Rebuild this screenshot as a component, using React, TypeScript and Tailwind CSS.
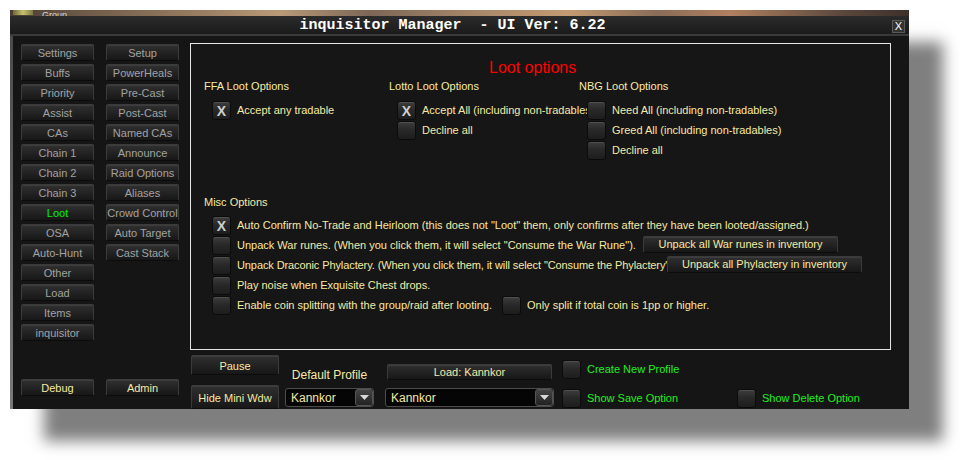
import type { ReactNode } from 'react'

const NAV_LEFT = [
  'Settings', 'Buffs', 'Priority', 'Assist', 'CAs', 'Chain 1', 'Chain 2', 'Chain 3',
  'Loot', 'OSA', 'Auto-Hunt', 'Other', 'Load', 'Items', 'inquisitor',
]
const NAV_RIGHT = [
  'Setup', 'PowerHeals', 'Pre-Cast', 'Post-Cast', 'Named CAs', 'Announce', 'Raid Options',
  'Aliases', 'Crowd Control', 'Auto Target', 'Cast Stack',
]

const btn =
  'rounded-[2px] border border-[#3b3b3b] border-b-[#0c0c0c] bg-[linear-gradient(#303030,#222_55%,#171717)] shadow-[inset_0_1px_0_rgba(255,255,255,0.07)] text-center text-[11px] whitespace-nowrap'

function NavButton({ label, active }: { label: string; active?: boolean }) {
  return (
    <div className={`${btn} h-[17px] w-[73px] pt-[1px] leading-[15px] ${active ? 'text-[#00f000]' : 'text-[#a2a2a2]'}`}>
      {label}
    </div>
  )
}

function Check({ on }: { on?: boolean }) {
  return (
    <div className="flex h-[19px] w-[19px] shrink-0 items-center justify-center rounded-[3px] border border-[#0b0b0b] bg-[linear-gradient(#3d3d3d,#292929_45%,#1d1d1d)] shadow-[inset_0_1px_0_rgba(255,255,255,0.1)]">
      {on && <span className="text-[14px] font-bold leading-none text-[#cfcfcf]">X</span>}
    </div>
  )
}

function Option({ on, children, green }: { on?: boolean; children: ReactNode; green?: boolean }) {
  return (
    <div className="flex h-[19px] items-center gap-[6px]">
      <Check on={on} />
      <span className={`whitespace-nowrap text-[11px] ${green ? 'text-[#22ee22]' : 'text-[#f6eaa4]'}`}>{children}</span>
    </div>
  )
}

function Dropdown({ value }: { value: string }) {
  return (
    <div className="flex h-[19px] items-center rounded-[3px] border border-[#4c4c4c] bg-[#050505]">
      <span className="flex-1 pl-[5px] text-[12px] leading-none text-[#f6eaa4]">{value}</span>
      <div className="flex h-[17px] w-[18px] items-center justify-center rounded-[3px] border border-[#555] bg-[linear-gradient(#444,#222)]">
        <svg width="9" height="5" viewBox="0 0 9 5">
          <polygon points="0,0 9,0 4.5,5" fill="#d8d8d8" />
        </svg>
      </div>
    </div>
  )
}

export default function App() {
  return (
    <div className="h-[460px] w-[960px] overflow-hidden bg-white pl-[10px] pt-[10px] font-['Liberation_Sans',Arial,sans-serif]">
      <div className="flex h-[399px] w-[899px] flex-col overflow-hidden bg-[#151515] shadow-[34px_32px_14px_rgba(0,0,0,0.5)]">
        {/* strip of the game view behind the window */}
        <div className="flex h-[6px] shrink-0 items-start overflow-hidden bg-[linear-gradient(90deg,#4a3c33,#6e5a48_8%,#9c8064_22%,#b89a78_30%,#7c6656_40%,#a8886a_52%,#c49a72_62%,#8a6c58_72%,#b08060_80%,#5e4a3e_92%,#3c302a)]">
          <span className="ml-[3px] h-[5px] w-[20px] bg-[linear-gradient(90deg,#6b6a3a,#c8c070,#7a7a40)]" />
          <span className="ml-[9px] text-[9px] leading-[10px] text-[#d8d8d8]">Group</span>
        </div>

        <div className="relative flex h-[18px] shrink-0 items-center justify-center bg-[linear-gradient(#2b2b2b,#1b1b1b)]">
          <span className="pt-[2px] pr-[14px] font-['Liberation_Mono',monospace] text-[15px] font-bold leading-[18px] whitespace-pre text-white">
            inquisitor Manager  - UI Ver: 6.22
          </span>
          <div className="absolute right-[4px] top-[4px] flex h-[13px] w-[13px] items-center justify-center border border-[#5a5a5a] bg-[#333] text-[11px] leading-none text-white">
            X
          </div>
        </div>
        <div className="h-[2px] shrink-0 bg-[#3a3a3a]" />

        <div className="flex min-h-0 flex-1 overflow-hidden">
          <div className="w-[3px] bg-[linear-gradient(#4a4a4a,#7a7a7a)]" />

          {/* left navigation */}
          <div className="flex w-[177px] flex-col pl-[8px] pt-[8px]">
            <div className="flex gap-[12px]">
              <div className="flex flex-col gap-[3px]">
                {NAV_LEFT.map((n) => (
                  <NavButton key={n} label={n} active={n === 'Loot'} />
                ))}
              </div>
              <div className="flex flex-col gap-[3px]">
                {NAV_RIGHT.map((n) => (
                  <NavButton key={n} label={n} />
                ))}
              </div>
            </div>
            <div className="mb-[13px] mt-auto flex gap-[12px]">
              <div className={`${btn} h-[17px] w-[73px] pt-[1px] leading-[15px] text-[#f6eaa4]`}>Debug</div>
              <div className={`${btn} h-[17px] w-[73px] pt-[1px] leading-[15px] text-[#f6eaa4]`}>Admin</div>
            </div>
          </div>

          <div className="flex flex-col">
            {/* loot options panel */}
            <div className="mt-[7px] flex h-[307px] w-[701px] shrink-0 flex-col border border-[#e6e6e6] bg-[#161616]">
              <div className="mt-[14px] pl-[298px] text-[16px] leading-[20px] text-[#ff0000]">Loot options</div>

              <div className="mt-[1px] flex pl-[13px]">
                <div className="flex w-[185px] flex-col">
                  <span className="text-[11px] leading-[14px] text-[#f6eaa4]">FFA Loot Options</span>
                  <div className="mt-[8px] flex flex-col gap-[1px] pl-[8px]">
                    <Option on>Accept any tradable</Option>
                  </div>
                </div>
                <div className="flex w-[190px] flex-col">
                  <span className="text-[11px] leading-[14px] text-[#f6eaa4]">Lotto Loot Options</span>
                  <div className="mt-[8px] flex flex-col gap-[1px] pl-[8px]">
                    <Option on>Accept All (including non-tradables)</Option>
                    <Option>Decline all</Option>
                  </div>
                </div>
                <div className="relative flex flex-col">
                  <span className="text-[11px] leading-[14px] text-[#f6eaa4]">NBG Loot Options</span>
                  <div className="mt-[8px] flex flex-col gap-[1px] pl-[8px]">
                    <Option>Need All (including non-tradables)</Option>
                    <Option>Greed All (including non-tradables)</Option>
                    <Option>Decline all</Option>
                  </div>
                </div>
              </div>

              <div className="mt-[35px] pl-[13px] text-[11px] leading-[14px] text-[#f6eaa4]">Misc Options</div>
              <div className="mt-[7px] flex flex-col gap-[1px] pl-[21px]">
                <Option on>
                  Auto Confirm No-Trade and Heirloom (this does not "Loot" them, only confirms after they have been
                  looted/assigned.)
                </Option>
                <div className="flex h-[19px] items-center gap-[6px]">
                  <Check />
                  <span className="w-[406px] whitespace-nowrap text-[11px] text-[#f6eaa4]">
                    Unpack War runes. (When you click them, it will select "Consume the War Rune").
                  </span>
                  <div className={`${btn} -ml-[6px] mt-[-2px] h-[17px] w-[195px] leading-[15px] text-[#f6eaa4]`}>
                    Unpack all War runes in inventory
                  </div>
                </div>
                <div className="flex h-[19px] items-center gap-[6px]">
                  <Check />
                  <span className="w-[430px] whitespace-nowrap text-[11px] tracking-[-0.1px] text-[#f6eaa4]">
                    Unpack Draconic Phylactery. (When you click them, it will select "Consume the Phylactery"
                  </span>
                  <div className={`${btn} -ml-[6px] mt-[-2px] h-[17px] w-[195px] leading-[15px] text-[#f6eaa4]`}>
                    Unpack all Phylactery in inventory
                  </div>
                </div>
                <Option>Play noise when Exquisite Chest drops.</Option>
                <div className="flex h-[19px] items-center gap-[6px]">
                  <Check />
                  <span className="w-[259px] whitespace-nowrap text-[11px] text-[#f6eaa4]">
                    Enable coin splitting with the group/raid after looting.
                  </span>
                  <Option>Only split if total coin is 1pp or higher.</Option>
                </div>
              </div>
            </div>

            {/* profile controls */}
            <div className="flex flex-1 items-start">
              <div className="ml-[1px] flex w-[88px] flex-col">
                <div className={`${btn} mt-[5px] h-[20px] pt-[3px] leading-[15px] text-[#f6eaa4]`}>Pause</div>
                <div className={`${btn} mt-[10px] h-[24px] pt-[3px] leading-[18px] text-[#f6eaa4]`}>Hide Mini Wdw</div>
              </div>
              <div className="ml-[6px] flex w-[89px] flex-col">
                <span className="mt-[18px] text-center text-[12px] leading-[14px] text-[#f6eaa4]">Default Profile</span>
                <div className="mt-[6px]">
                  <Dropdown value="Kannkor" />
                </div>
              </div>
              <div className="ml-[11px] flex w-[169px] flex-col">
                <div className={`${btn} mx-[2px] mt-[14px] h-[16px] leading-[14px] text-[#f6eaa4]`}>Load: Kannkor</div>
                <div className="mt-[8px]">
                  <Dropdown value="Kannkor" />
                </div>
              </div>
              <div className="ml-[8px] flex w-[175px] flex-col">
                <div className="mt-[10px]">
                  <Option green>Create New Profile</Option>
                </div>
                <div className="mt-[10px]">
                  <Option green>Show Save Option</Option>
                </div>
              </div>
              <div className="mt-[39px]">
                <Option green>Show Delete Option</Option>
              </div>
            </div>
          </div>
        </div>
      </div>
    </div>
  )
}
